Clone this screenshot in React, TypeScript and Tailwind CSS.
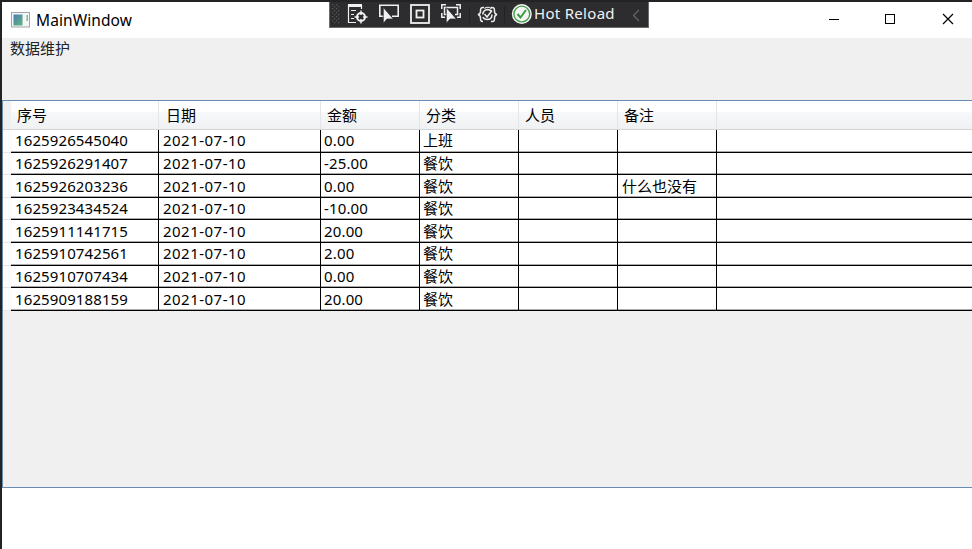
import React from "react";

const rows = [
  { id: "1625926545040", amount: "0.00", kind: "上班", note: "", h: "h-[23px]", line: "leading-[20px]" },
  { id: "1625926291407", amount: "-25.00", kind: "餐饮", note: "", h: "h-[22px]", line: "leading-[20px]" },
  { id: "1625926203236", amount: "0.00", kind: "餐饮", note: "什么也没有", h: "h-[23px]", line: "leading-[22px]" },
  { id: "1625923434524", amount: "-10.00", kind: "餐饮", note: "", h: "h-[22px]", line: "leading-[21px]" },
  { id: "1625911141715", amount: "20.00", kind: "餐饮", note: "", h: "h-[23px]", line: "leading-[22px]" },
  { id: "1625910742561", amount: "2.00", kind: "餐饮", note: "", h: "h-[23px]", line: "leading-[21px]" },
  { id: "1625910707434", amount: "0.00", kind: "餐饮", note: "", h: "h-[22px]", line: "leading-[21px]" },
  { id: "1625909188159", amount: "20.00", kind: "餐饮", note: "", h: "h-[23px]", line: "leading-[22px]" },
];

const widths = ["w-[148px]", "w-[162px]", "w-[99px]", "w-[99px]", "w-[99px]", "w-[99px]"];
const headerPads = ["pl-[6px]", "pl-[7px]", "pl-[6px]", "pl-[6px]", "pl-[6px]", "pl-[6px]"];
const cellPads = ["pl-[4px]", "pl-[4px]", "pl-[3px]", "pl-[3px]", "pl-[3px]", "pl-[4px]"];
const tracking = ["tracking-[0.11px]", "tracking-[0.48px]", "tracking-[0.15px]", "", "", ""];
const headers = ["序号", "日期", "金额", "分类", "人员", "备注"];

function DebugBar() {
  return (
    <div className="absolute left-[329px] top-0 flex h-7 w-[320px] border border-[#6b6b6e] bg-[#2d2d30]">
      <svg className="-ml-px -mt-px h-7 w-[205px] shrink-0" viewBox="329 0 205 28" fill="none">
        <defs>
          <pattern id="grip" width="4" height="4" patternUnits="userSpaceOnUse" x="332" y="4">
            <rect width="1.2" height="1.2" fill="#56565a" />
            <rect x="2" y="2" width="1.2" height="1.2" fill="#56565a" />
          </pattern>
        </defs>
        <path d="M329 1.500H534" stroke="#6b6b6e" />
        <rect x="332" y="4" width="8" height="20" fill="url(#grip)" />
        <g stroke="#f0f0f0">
          <path d="M348.500 5V22.500H356M361.500 5V9" strokeWidth="1.200" />
          <path d="M348 5.500H362" strokeWidth="3" />
          <path d="M351 10.500H356M351 14.500H354M351 18.500H354" strokeWidth="1.200" />
          <circle cx="361" cy="17" r="4" strokeWidth="2" />
          <path d="M361 10.500V15M361 19V23.500M354.500 17H359M363 17H367.500" strokeWidth="1.500" />
          <path d="M384 16.200H379.800V5.200H398.200V16.200H392" strokeWidth="1.600" />
          <rect x="411" y="5" width="18" height="18" strokeWidth="1.800" />
          <rect x="416.500" y="10.500" width="7" height="7" strokeWidth="1.800" />
          <path d="M441.800 9V4.800H446M456 4.800H460.200V9M460.200 13V17.200H457M445 17.200H441.800V13" strokeWidth="1.500" />
          <path d="M447 14.500H444.500V7.500H457.500V14.500H455" strokeWidth="1.500" />
        </g>
        <path d="M383.300 7.500V23.300L387 19H393.300Z" fill="#f0f0f0" stroke="#2d2d30" strokeWidth=".7" />
        <path d="M446.300 7.500V23.300L450 19H456.300Z" fill="#f0f0f0" stroke="#2d2d30" strokeWidth=".7" />
        <path d="M469.500 6V23M504.500 6V23" stroke="#222225" />
        <g stroke="#ededed" strokeWidth="1.500">
          <path d="M484 7.500C480.500 7 480.500 9 480.500 11.500C480.500 13.500 480 14 478 14.500C480 15 480.500 16 480.500 18C480.500 20.500 480.500 21.500 483 21.500" />
          <path d="M491 7.500C494.500 7 494.500 9 494.500 11.500C494.500 13.500 495 14 497 14.500C495 15 494.500 16 494.500 18C494.500 20.500 494.500 22 491 21.500" />
          <path d="M482.800 14.500C482.800 11 484.500 10 487.300 9.500C489 9.500 490.500 10 491.500 11.500M492 14.500C492 18 490 19.500 487.300 19.500C485 19.500 483.500 18.500 483 17" />
          <path d="M484.500 14L487 17L492 10.500" />
          <path d="M484.500 8.500C487 6.500 490 7 491.500 9" strokeWidth="1.100" />
        </g>
        <circle cx="521.800" cy="14" r="10" fill="#f5f5f5" />
        <circle cx="521.800" cy="14" r="7.900" stroke="#43a047" strokeWidth="1.400" />
        <path d="M517.500 14L520.500 17.500L526 10" stroke="#369b3c" strokeWidth="2" />
      </svg>
      <span className="w-[98px] whitespace-nowrap text-[15px] leading-[24px] tracking-[0.3px] text-[#f1f1f1]">Hot Reload</span>
      <svg className="h-7 w-[12px]" viewBox="0 0 12 28" fill="none">
        <path d="M7 9L1.500 14.500L7 20" stroke="#66666a" strokeWidth="1.200" />
      </svg>
    </div>
  );
}

function TitleBar() {
  return (
    <header className="flex h-9 items-center bg-white">
      <svg className="-mt-px ml-[9px] h-[16px] w-[20px]" viewBox="0 0 20 16">
        <defs>
          <linearGradient id="pane" x2="1" y2="1">
            <stop stopColor="#4a7fb5" />
            <stop offset="1" stopColor="#64b47d" />
          </linearGradient>
        </defs>
        <rect x=".5" y=".5" width="18" height="14.500" fill="#f3f5f6" stroke="#a1a5ad" />
        <rect x="2.500" y="2.500" width="9" height="11" fill="url(#pane)" />
        <rect x="15.500" y="3" width="1.500" height="6" fill="#82b995" />
      </svg>
      <span className="-mt-px ml-[5px] text-[15.500px] leading-5 tracking-[0.08px] text-black">MainWindow</span>
      <svg className="ml-auto h-9 w-[172px]" viewBox="800 2 172 36" fill="none" stroke="#000">
        <path d="M829 19.500H839" />
        <rect x="885.500" y="14.500" width="9" height="9" />
        <path d="M943 14L953 24M953 14L943 24" strokeWidth="1.200" />
      </svg>
    </header>
  );
}

function DataGrid() {
  return (
    <section className="flex h-[388px] flex-col border-y border-l border-[#688caf] bg-[#f0f0f0]">
      <div className="flex h-[29px] border-b border-[#d2d3d5] bg-[linear-gradient(#fff_0,#fff_40%,#f7f8fa_41%,#f0f1f3_100%)]">
        <div className="w-2 bg-[#f0f0f0]" />
        {headers.map((h, i) => (
          <div key={h} className={`${widths[i]} ${headerPads[i]} shrink-0 border-r border-[#e4e5e7] text-[15px] leading-[28px]`}>
            {h}
          </div>
        ))}
      </div>
      {rows.map((r) => (
        <div key={r.id} className={`flex ${r.h} bg-white`}>
          <div className="w-2 shrink-0 border-b border-[#e5e6e8] bg-[#fcfcfd]" />
          <div className="flex flex-1 border-b border-black shadow-[inset_0_-1px_0_#aaa]">
            {[r.id, "2021-07-10", r.amount, r.kind, "", r.note].map((v, i) => (
              <div key={i} className={`${widths[i]} ${cellPads[i]} ${tracking[i]} ${r.line} shrink-0 whitespace-nowrap border-r border-black text-[15px]`}>
                {v}
              </div>
            ))}
          </div>
        </div>
      ))}
    </section>
  );
}

export default function App() {
  return (
    <div className="relative h-[549px] w-[972px] overflow-hidden border-l-2 border-t-2 border-[#232225] bg-white font-['Noto_Sans','Noto_Sans_CJK_SC',sans-serif] text-black">
      <TitleBar />
      <nav className="h-[62px] bg-[#f0f0f0] pl-2 text-[15px] leading-[21px] text-[#222]">数据维护</nav>
      <DataGrid />
      <div className="absolute -left-0.5 -top-0.5">
        <DebugBar />
      </div>
    </div>
  );
}
